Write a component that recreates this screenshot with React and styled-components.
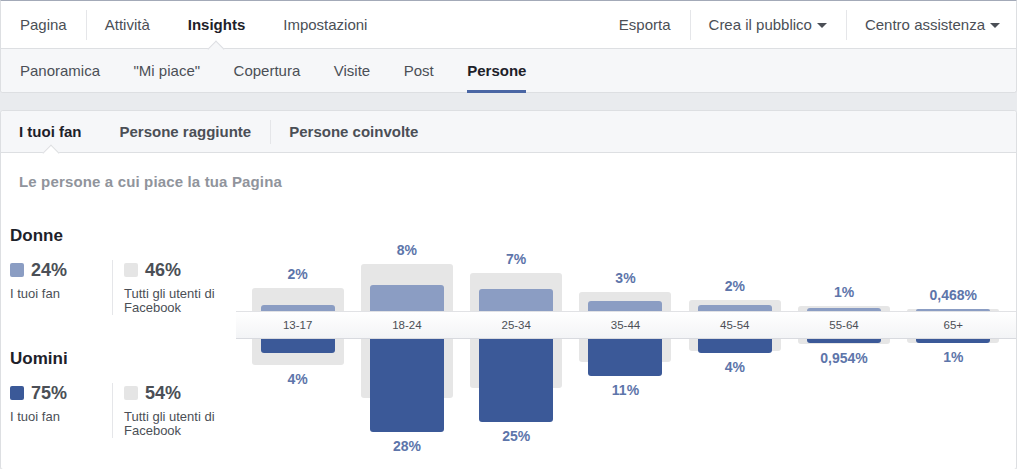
import React from "react"
import styled, { createGlobalStyle } from "styled-components"

const GlobalStyle = createGlobalStyle`
  html, body {
    margin: 0;
    padding: 0;
  }
  body {
    background: #e9ebee;
    font-family: "Liberation Sans", Helvetica, Arial, sans-serif;
    color: #4b4f56;
  }
`

const leftNav = ["Pagina", "Attività", "Insights", "Impostazioni"]
const rightNav = [
  { label: "Esporta" },
  { label: "Crea il pubblico", menu: true },
  { label: "Centro assistenza", menu: true },
]
const sections = ["Panoramica", "\"Mi piace\"", "Copertura", "Visite", "Post", "Persone"]
const tabs = ["I tuoi fan", "Persone raggiunte", "Persone coinvolte"]

// heights in px: fans at 3.32px per %, grey = all Facebook users
const ages = [
  { range: "13-17", womenLabel: "2%", menLabel: "4%", women: 6, men: 14, allWomen: 23, allMen: 26 },
  { range: "18-24", womenLabel: "8%", menLabel: "28%", women: 26, men: 93, allWomen: 47, allMen: 59 },
  { range: "25-34", womenLabel: "7%", menLabel: "25%", women: 22, men: 83, allWomen: 38, allMen: 49 },
  { range: "35-44", womenLabel: "3%", menLabel: "11%", women: 10, men: 37, allWomen: 19, allMen: 23 },
  { range: "45-54", womenLabel: "2%", menLabel: "4%", women: 6, men: 14, allWomen: 11, allMen: 12 },
  { range: "55-64", womenLabel: "1%", menLabel: "0,954%", women: 3, men: 4, allWomen: 5, allMen: 5 },
  { range: "65+", womenLabel: "0,468%", menLabel: "1%", women: 2, men: 4, allWomen: 2, allMen: 4 },
]

const legend = [
  { title: "Donne", fans: "24%", all: "46%", color: "#8b9dc3" },
  { title: "Uomini", fans: "75%", all: "54%", color: "#3b5998" },
]

const App = () => {
  return (
    <Page>
      <GlobalStyle />
      <TopPanel>
        <Header>
          <NavGroup>
            {leftNav.map(item => (
              <NavItem key={item} $active={item === "Insights"}>{item}</NavItem>
            ))}
          </NavGroup>
          <NavGroup $right>
            {rightNav.map(item => (
              <NavItem key={item.label}>
                {item.label}
                {item.menu && <Caret />}
              </NavItem>
            ))}
          </NavGroup>
        </Header>
        <SubNav>
          {sections.map(item => (
            <SubNavItem key={item} $active={item === "Persone"}>{item}</SubNavItem>
          ))}
        </SubNav>
      </TopPanel>

      <Card>
        <Tabs>
          {tabs.map((tab, i) => (
            <Tab key={tab} $active={i === 0}>{tab}</Tab>
          ))}
        </Tabs>
        <Subtitle>Le persone a cui piace la tua Pagina</Subtitle>
        <Demographics>
          <Legend>
            {legend.map(g => (
              <LegendGroup key={g.title}>
                <Gender>{g.title}</Gender>
                <Stats>
                  <Stat $first>
                    <StatValue><Swatch $color={g.color} />{g.fans}</StatValue>
                    <StatCaption>I tuoi fan</StatCaption>
                  </Stat>
                  <Stat>
                    <StatValue><Swatch $color="#e5e5e5" />{g.all}</StatValue>
                    <StatCaption>Tutti gli utenti di Facebook</StatCaption>
                  </Stat>
                </Stats>
              </LegendGroup>
            ))}
          </Legend>
          <Chart>
            <Half $up $h={85}>
              {ages.map(a => (
                <Slot key={a.range}>
                  <Value $up>{a.womenLabel}</Value>
                  <Backdrop $up $h={a.allWomen} $over={Math.max(0, a.women - a.allWomen)}>
                    <Bar $up $h={a.women} $color="#8b9dc3" />
                  </Backdrop>
                </Slot>
              ))}
            </Half>
            <Band>
              {ages.map(a => (
                <BandCell key={a.range}>{a.range}</BandCell>
              ))}
            </Band>
            <Half $h={130}>
              {ages.map(a => (
                <Slot key={a.range}>
                  <Backdrop $h={a.allMen} $over={Math.max(0, a.men - a.allMen)}>
                    <Bar $h={a.men} $color="#3b5998" />
                  </Backdrop>
                  <Value>{a.menLabel}</Value>
                </Slot>
              ))}
            </Half>
          </Chart>
        </Demographics>
      </Card>
    </Page>
  )
}

const Page = styled.div`
  width: 1017px;
  height: 469px;
  overflow: hidden;
`

const TopPanel = styled.div`
  background: #fff;
  border: 1px solid #dddfe2;
  border-top: 1px solid #a3aab8;
  border-radius: 0 0 3px 3px;
`

const Header = styled.div`
  position: relative;
  z-index: 2;
  height: 47px;
  display: flex;
  justify-content: space-between;
`

const NavGroup = styled.div`
  display: flex;
  margin-right: ${p => p.$right ? "-3px" : "0"};
`

const NavItem = styled.div`
  position: relative;
  display: flex;
  align-items: center;
  padding: 0 19px;
  font-size: 15px;
  font-weight: ${p => p.$active ? "bold" : "normal"};
  color: ${p => p.$active ? "#1d2129" : "#4b4f56"};
  white-space: nowrap;

  & + &::before {
    content: "";
    position: absolute;
    left: 0;
    top: 9px;
    width: 1px;
    height: 30px;
    background: #e5e6e9;
  }

  &::after {
    content: "";
    display: ${p => p.$active ? "block" : "none"};
    position: absolute;
    left: 50%;
    bottom: -7px;
    width: 12px;
    height: 12px;
    margin-left: -6px;
    box-sizing: border-box;
    background: #f6f7f9;
    border-top: 1px solid #dddfe2;
    border-left: 1px solid #dddfe2;
    transform: rotate(45deg);
  }
`

const Caret = styled.span`
  display: inline-block;
  margin-left: 5px;
  margin-top: 2px;
  border-left: 5px solid transparent;
  border-right: 5px solid transparent;
  border-top: 5px solid #4b4f56;
`

const SubNav = styled.div`
  height: 43px;
  display: flex;
  gap: 33.5px;
  padding-left: 19px;
  background: #f6f7f9;
  border-top: 1px solid #dddfe2;
  border-radius: 0 0 3px 3px;
`

const SubNavItem = styled.div`
  position: relative;
  display: flex;
  align-items: center;
  font-size: 15px;
  font-weight: ${p => p.$active ? "bold" : "normal"};
  color: ${p => p.$active ? "#1d2129" : "#4b4f56"};
  white-space: nowrap;

  &::after {
    content: "";
    display: ${p => p.$active ? "block" : "none"};
    position: absolute;
    left: 0;
    right: 0;
    bottom: -1px;
    height: 3px;
    background: #4a66a4;
  }
`

const Card = styled.div`
  margin-top: 17px;
  background: #fff;
  border: 1px solid #dddfe2;
  border-radius: 3px;
`

const Tabs = styled.div`
  position: relative;
  z-index: 1;
  height: 41px;
  display: flex;
  background: #f6f7f9;
  border-bottom: 1px solid #dddfe2;
  border-radius: 3px 3px 0 0;
`

const Tab = styled.div`
  position: relative;
  display: flex;
  align-items: center;
  padding: 0 19px;
  font-size: 15px;
  font-weight: bold;
  color: ${p => p.$active ? "#1d2129" : "#4b4f56"};
  white-space: nowrap;

  &:first-child {
    padding-left: 18px;
  }

  & + &::before {
    content: "";
    position: absolute;
    left: 0;
    top: 9px;
    width: 1px;
    height: 24px;
    background: #e5e6e9;
  }

  &::after {
    content: "";
    display: ${p => p.$active ? "block" : "none"};
    position: absolute;
    left: 50%;
    bottom: -7px;
    width: 12px;
    height: 12px;
    margin-left: -6px;
    box-sizing: border-box;
    background: #fff;
    border-top: 1px solid #dddfe2;
    border-left: 1px solid #dddfe2;
    transform: rotate(45deg);
  }
`

const Subtitle = styled.div`
  padding: 20px 0 0 18px;
  font-size: 15px;
  line-height: 18px;
  font-weight: bold;
  letter-spacing: 0.15px;
  color: #90949c;
`

const Demographics = styled.div`
  display: flex;
  margin-top: 35px;
`

const Legend = styled.div`
  width: 235px;
  flex-shrink: 0;
  box-sizing: border-box;
  padding-left: 9px;
`

const LegendGroup = styled.div`
  & + & {
    margin-top: 34px;
  }
`

const Gender = styled.div`
  font-size: 17px;
  line-height: 20px;
  font-weight: bold;
  color: #1d2129;
`

const Stats = styled.div`
  display: flex;
  margin-top: 14px;
`

const Stat = styled.div`
  box-sizing: border-box;
  width: ${p => p.$first ? "103px" : "112px"};
  padding-left: ${p => p.$first ? "0" : "11px"};
  border-right: ${p => p.$first ? "1px solid #e5e6e9" : "none"};
`

const StatValue = styled.div`
  display: flex;
  align-items: center;
  gap: 7px;
  font-size: 18px;
  line-height: 20px;
  font-weight: bold;
  color: #4b4f56;
`

const Swatch = styled.span`
  width: 14px;
  height: 14px;
  border-radius: 2px;
  background: ${p => p.$color};
`

const StatCaption = styled.div`
  width: 100px;
  margin-top: 7px;
  font-size: 13px;
  line-height: 14px;
  color: #4b4f56;
`

const Chart = styled.div`
  flex: 1;
  display: flex;
  flex-direction: column;
`

const Half = styled.div`
  height: ${p => p.$h}px;
  display: flex;
  align-items: ${p => p.$up ? "flex-end" : "flex-start"};
  padding: 0 8px 0 7px;
`

const Slot = styled.div`
  flex: 1;
  display: flex;
  flex-direction: column;
  align-items: center;
`

const Value = styled.div`
  margin: ${p => p.$up ? "0 0 6px" : "6px 0 0"};
  font-size: 14px;
  line-height: 16px;
  font-weight: bold;
  color: #5d75aa;
  white-space: nowrap;
`

const Backdrop = styled.div`
  width: 92px;
  height: ${p => p.$h}px;
  margin-top: ${p => p.$up ? p.$over : 0}px;
  margin-bottom: ${p => p.$up ? 0 : p.$over}px;
  display: flex;
  justify-content: center;
  align-items: ${p => p.$up ? "flex-end" : "flex-start"};
  background: #e6e6e6;
  border-radius: ${p => p.$up ? "3px 3px 0 0" : "0 0 3px 3px"};
`

const Bar = styled.div`
  width: 74px;
  height: ${p => p.$h}px;
  flex-shrink: 0;
  background: ${p => p.$color};
  border-radius: ${p => p.$up ? "3px 3px 0 0" : "0 0 3px 3px"};
`

const Band = styled.div`
  position: relative;
  z-index: 1;
  height: 26px;
  display: flex;
  padding: 0 8px 0 7px;
  background: linear-gradient(to bottom, #ffffff, #f3f4f6);
  border-top: 1px solid #e1e2e5;
  border-bottom: 1px solid #d8dadf;
`

const BandCell = styled.div`
  flex: 1;
  text-align: center;
  font-size: 11.5px;
  line-height: 26px;
  color: #4b4f56;
`

export default App
